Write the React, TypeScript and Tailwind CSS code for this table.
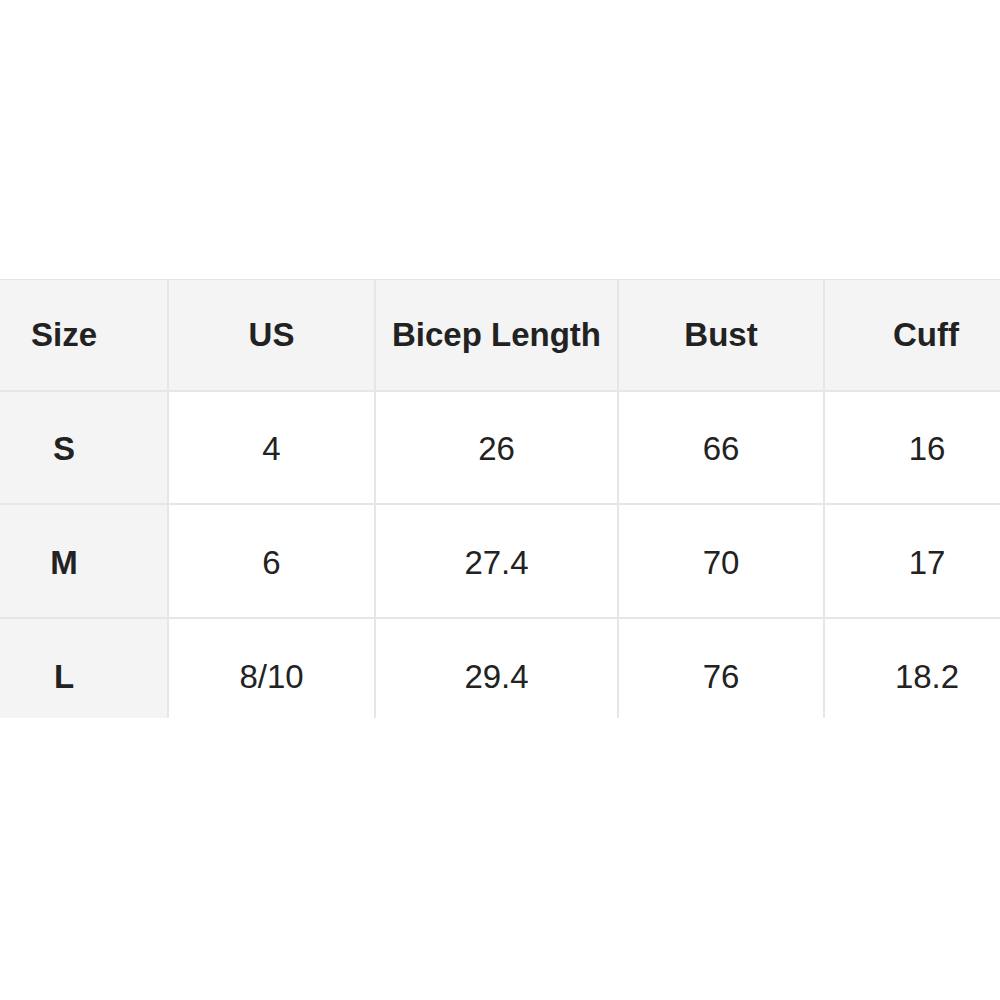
import React from "react";

const headers = ["Size", "US", "Bicep Length", "Bust", "Cuff"];
const rows = [
  ["S", "4", "26", "66", "16"],
  ["M", "6", "27.4", "70", "17"],
  ["L", "8/10", "29.4", "76", "18.2"],
];
const heights = ["h-[111px]", "h-[112px]", "h-[112px]"];

export default function App() {
  return (
    <div className="w-[1000px] h-[1000px] bg-white overflow-hidden" style={{ fontFamily: '"Liberation Sans", Arial, sans-serif' }}>
      <div className="mt-[279px] ml-[-39px] w-[1080px] h-[439px] overflow-hidden pt-[1px] bg-[#e6e6e6]">
        <div className="grid grid-cols-[206px_205px_241px_204px_216px] gap-[2px]">
          {headers.map((h, i) => (
            <div key={h} className={`h-[110px] bg-[#f4f4f4] flex items-center text-[33px] font-bold text-[#222] ${i === 4 ? "justify-start pl-[68px]" : "justify-center"}`}>
              {h}
            </div>
          ))}
          {rows.map((r, ri) =>
            r.map((c, ci) => (
              <div
                key={ri + "-" + ci}
                className={`${heights[ri]} flex items-center pt-[3px] text-[#222] text-[33px] ${ci === 0 ? "bg-[#f4f4f4] font-bold" : "bg-white"} ${ci === 4 ? "justify-start" : "justify-center"}`}
              >
                {ci === 4 ? <span className="w-[204px] text-center">{c}</span> : c}
              </div>
            ))
          )}
        </div>
      </div>
    </div>
  );
}
